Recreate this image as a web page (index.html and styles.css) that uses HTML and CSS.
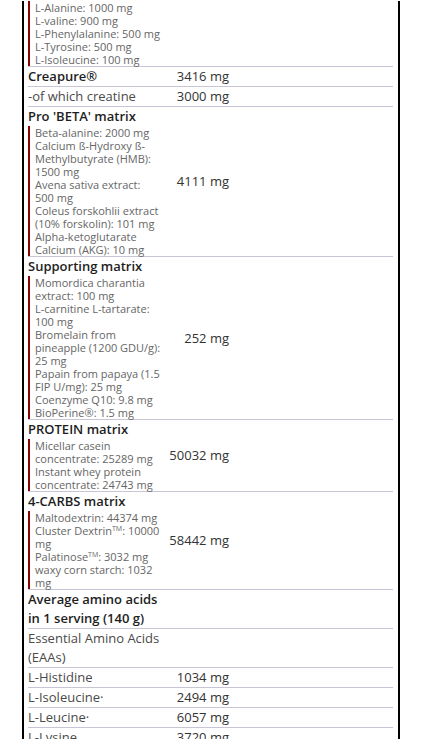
FILE: index.html
```html
<!DOCTYPE html>
<html lang="en">
<head>
<meta charset="utf-8">
<title>Nutrition facts</title>
<link rel="stylesheet" href="styles.css">
</head>
<body>
<div class="panel">
  <div class="row group">
    <div class="name">
      <ul class="sub">
        <li>L-Alanine: 1000 mg</li>
        <li>L-valine: 900 mg</li>
        <li>L-Phenylalanine: 500 mg</li>
        <li>L-Tyrosine: 500 mg</li>
        <li>L-Isoleucine: 100 mg</li>
      </ul>
    </div>
    <div class="val"></div>
  </div>
  <div class="row">
    <div class="name title">Creapure®</div>
    <div class="val">3416 mg</div>
  </div>
  <div class="row">
    <div class="name">-of which creatine</div>
    <div class="val">3000 mg</div>
  </div>
  <div class="row group">
    <div class="name">
      <div class="title">Pro 'BETA' matrix</div>
      <ul class="sub">
        <li>Beta-alanine: 2000 mg</li>
        <li>Calcium ß-Hydroxy ß-Methylbutyrate (HMB): 1500 mg</li>
        <li>Avena sativa extract: 500 mg</li>
        <li>Coleus forskohlii extract (10% forskolin): 101 mg</li>
        <li>Alpha-ketoglutarate Calcium (AKG): 10 mg</li>
      </ul>
    </div>
    <div class="val">4111 mg</div>
  </div>
  <div class="row group">
    <div class="name">
      <div class="title">Supporting matrix</div>
      <ul class="sub">
        <li>Momordica charantia extract: 100 mg</li>
        <li>L-carnitine L-tartarate: 100 mg</li>
        <li>Bromelain from pineapple (1200 GDU/g): 25 mg</li>
        <li>Papain from papaya (1.5 FIP U/mg): 25 mg</li>
        <li>Coenzyme Q10: 9.8 mg</li>
        <li>BioPerine®: 1.5 mg</li>
      </ul>
    </div>
    <div class="val">252 mg</div>
  </div>
  <div class="row group">
    <div class="name">
      <div class="title">PROTEIN matrix</div>
      <ul class="sub">
        <li>Micellar casein concentrate: 25289 mg</li>
        <li>Instant whey protein concentrate: 24743 mg</li>
      </ul>
    </div>
    <div class="val">50032 mg</div>
  </div>
  <div class="row group">
    <div class="name">
      <div class="title">4-CARBS matrix</div>
      <ul class="sub">
        <li>Maltodextrin: 44374 mg</li>
        <li>Cluster Dextrin<sup class="tm">TM</sup>: 10000 mg</li>
        <li>Palatinose<sup class="tm">TM</sup>: 3032 mg</li>
        <li>waxy corn starch: 1032 mg</li>
      </ul>
    </div>
    <div class="val">58442 mg</div>
  </div>
  <div class="row">
    <div class="name title">Average amino acids in 1 serving (140 g)</div>
    <div class="val"></div>
  </div>
  <div class="row">
    <div class="name">Essential Amino Acids (EAAs)</div>
    <div class="val"></div>
  </div>
  <div class="row">
    <div class="name">L-Histidine</div>
    <div class="val">1034 mg</div>
  </div>
  <div class="row">
    <div class="name">L-Isoleucine·</div>
    <div class="val">2494 mg</div>
  </div>
  <div class="row">
    <div class="name">L-Leucine·</div>
    <div class="val">6057 mg</div>
  </div>
  <div class="row">
    <div class="name">L-Lysine</div>
    <div class="val">3720 mg</div>
  </div>
  <div class="row">
    <div class="name">L-Methionine</div>
    <div class="val">1120 mg</div>
  </div>
</div>
</body>
</html>
```
FILE: styles.css
```css
html, body {
  margin: 0;
  padding: 0;
  background: #fff;
}

body {
  padding-top: 1px;
  font-family: "Open Sans", "Liberation Sans", sans-serif;
  font-size: 13px;
  line-height: 19px;
  color: #4a4a4a;
}

.panel {
  margin-left: 22px;
  width: 365px;
  border-left: 2px solid #000;
  border-right: 2px solid #000;
  padding: 0 5px 0 4px;
}

.row {
  display: grid;
  grid-template-columns: 133px 68px;
  border-bottom: 1px solid #c8c6d6;
}

.name {
  min-width: 0;
}

.title {
  font-weight: 600;
  color: #1e1e1e;
}

.val {
  align-self: center;
  text-align: right;
  color: #333;
}

.sub {
  list-style: none;
  margin: 0;
  padding: 0 0 0 5px;
  border-left: 2px solid #8b0000;
  font-size: 11px;
  line-height: 13px;
  color: #666;
}

.tm {
  font-size: 7px;
  line-height: 0;
  vertical-align: 4px;
}
```
